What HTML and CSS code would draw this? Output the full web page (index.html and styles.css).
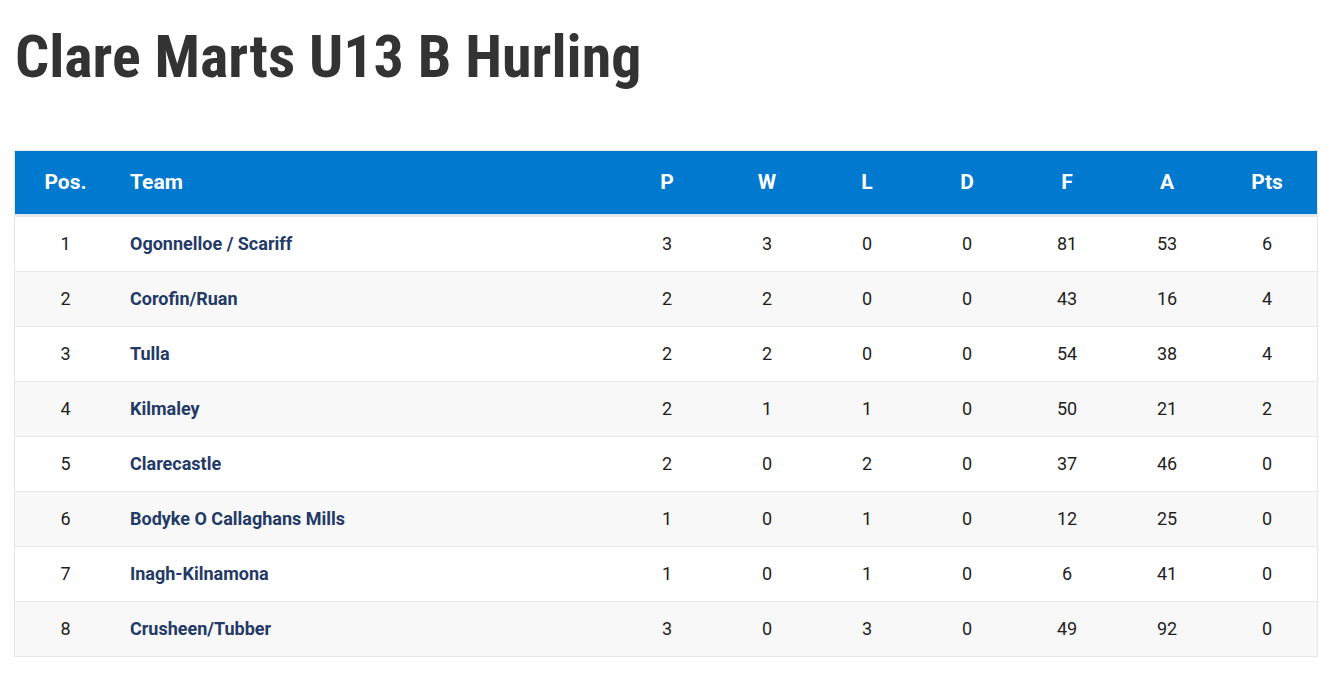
FILE: index.html
```html
<!DOCTYPE html>
<html lang="en">
<head>
<meta charset="utf-8">
<title>Clare Marts U13 B Hurling</title>
<link rel="stylesheet" href="styles.css">
</head>
<body>
<h1 class="title">Clare Marts U13 B Hurling</h1>
<table class="league">
  <thead>
    <tr>
      <th class="pos">Pos.</th>
      <th class="team">Team</th>
      <th>P</th><th>W</th><th>L</th><th>D</th><th>F</th><th>A</th><th>Pts</th>
    </tr>
  </thead>
  <tbody>
    <tr><td class="pos">1</td><td class="team">Ogonnelloe / Scariff</td><td>3</td><td>3</td><td>0</td><td>0</td><td>81</td><td>53</td><td>6</td></tr>
    <tr><td class="pos">2</td><td class="team">Corofin/Ruan</td><td>2</td><td>2</td><td>0</td><td>0</td><td>43</td><td>16</td><td>4</td></tr>
    <tr><td class="pos">3</td><td class="team">Tulla</td><td>2</td><td>2</td><td>0</td><td>0</td><td>54</td><td>38</td><td>4</td></tr>
    <tr><td class="pos">4</td><td class="team">Kilmaley</td><td>2</td><td>1</td><td>1</td><td>0</td><td>50</td><td>21</td><td>2</td></tr>
    <tr><td class="pos">5</td><td class="team">Clarecastle</td><td>2</td><td>0</td><td>2</td><td>0</td><td>37</td><td>46</td><td>0</td></tr>
    <tr><td class="pos">6</td><td class="team">Bodyke O Callaghans Mills</td><td>1</td><td>0</td><td>1</td><td>0</td><td>12</td><td>25</td><td>0</td></tr>
    <tr><td class="pos">7</td><td class="team">Inagh-Kilnamona</td><td>1</td><td>0</td><td>1</td><td>0</td><td>6</td><td>41</td><td>0</td></tr>
    <tr><td class="pos">8</td><td class="team">Crusheen/Tubber</td><td>3</td><td>0</td><td>3</td><td>0</td><td>49</td><td>92</td><td>0</td></tr>
  </tbody>
</table>
</body>
</html>
```

FILE: styles.css
```css
html, body {
  margin: 0;
  padding: 0;
  background: #ffffff;
}
body {
  padding: 0 25px 0 14px;
  font-family: Roboto, "Liberation Sans", sans-serif;
  color: #222222;
}
.title {
  font-family: "Roboto Condensed", Roboto, "Liberation Sans", sans-serif;
  font-stretch: condensed;
  font-weight: 700;
  font-size: 60px;
  line-height: 72px;
  color: #333333;
  margin: 21px 0 0 1px;
  padding: 0;
}
.league {
  width: 1304px;
  margin-top: 57px;
  border-collapse: collapse;
  border: 1px solid #e6e6e6;
  table-layout: fixed;
}
.league thead tr {
  background: #0079cf;
  border-bottom: 3px solid #e6e8ef;
}
.league th {
  height: 61px;
  padding: 0 0 2px 0;
  color: #ffffff;
  font-weight: 700;
  font-size: 21px;
  text-align: center;
  width: 100px;
}
.league th.pos, .league td.pos {
  width: 101px;
}
.league th.team {
  width: auto;
  text-align: left;
  padding-left: 14px;
}
.league td {
  height: 52px;
  padding: 0 0 2px 0;
  font-size: 18px;
  text-align: center;
  color: #1e1e1e;
  border-top: 1px solid #e9e9e9;
}
.league tbody tr:first-child td {
  border-top: none;
}
.league tbody tr:nth-child(even) {
  background: #f8f8f8;
}
.league td.team {
  text-align: left;
  padding-left: 14px;
  font-weight: 700;
  color: #243a66;
}
```
